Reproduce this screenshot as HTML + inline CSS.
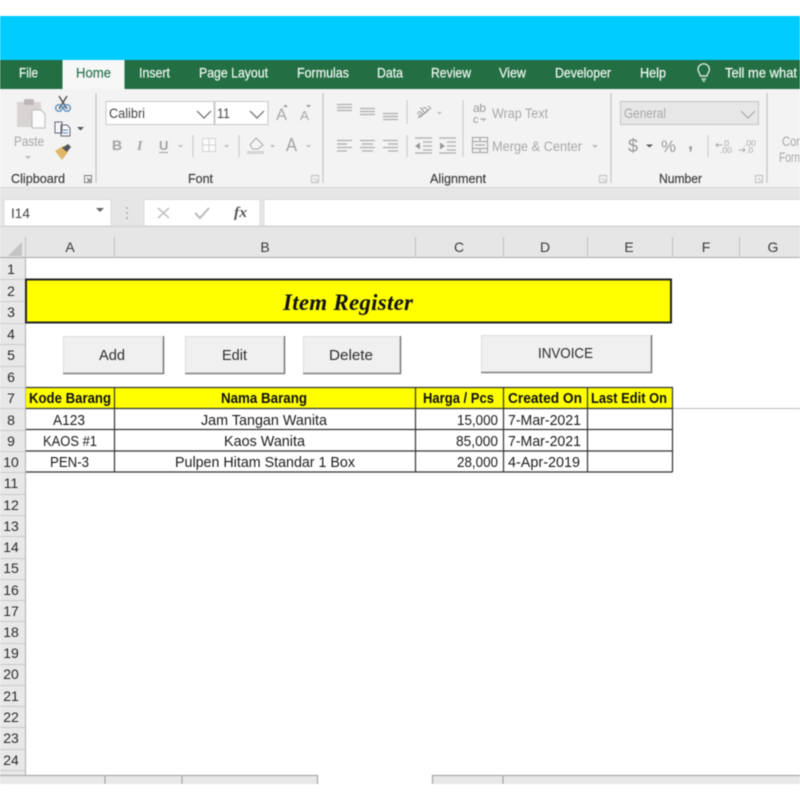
<!DOCTYPE html>
<html><head><meta charset="utf-8"><title>Item Register</title>
<style>
html,body{margin:0;padding:0;background:#fff;width:800px;height:800px;overflow:hidden}
svg{display:block;filter:blur(.45px)}
text{font-family:"Liberation Sans",sans-serif;}
.tab{font-size:14px;fill:#f2f8f4;stroke:#f2f8f4;stroke-width:.2}
.lbl{font-size:13px;fill:#3a3a3a;stroke:#3a3a3a;stroke-width:.15}
.dis{font-size:14px;fill:#a8a8a8}
.col{font-size:14px;fill:#3a3a3a;text-anchor:middle}
.row{font-size:14px;fill:#2a2a2a;text-anchor:middle}
.cell{font-size:14.500px;fill:#1c1c1c}
.hd{font-size:14.500px;font-weight:bold;fill:#111}
.btn{font-size:15px;fill:#2c2c2c}
.ln{stroke:#adadad;stroke-width:1.200;fill:none}
.sep{stroke:#cdcdcd;stroke-width:1.200}
.gsep{stroke:#c6c6c6;stroke-width:1.300}
.chev{stroke:#666;stroke-width:1.200;fill:none}
</style></head><body>
<svg width="800" height="800" viewBox="0 0 800 800" xmlns="http://www.w3.org/2000/svg">
<rect width="800" height="800" fill="#fff"/>
<rect y="16" width="800" height="44" fill="#00ccff"/>
<rect y="60" width="800" height="29" fill="#236f43"/>
<rect x="62.500" y="60" width="62" height="30" fill="#f7f7f7"/>
<text class="tab" x="19" y="77.500" textLength="19" lengthAdjust="spacingAndGlyphs">File</text>
<text class="tab" style="fill:#2a7450;stroke:#2a7450" x="76" y="77.500" textLength="35" lengthAdjust="spacingAndGlyphs">Home</text>
<text class="tab" x="139" y="77.500" textLength="31" lengthAdjust="spacingAndGlyphs">Insert</text>
<text class="tab" x="199" y="77.500" textLength="69" lengthAdjust="spacingAndGlyphs">Page Layout</text>
<text class="tab" x="297" y="77.500" textLength="52" lengthAdjust="spacingAndGlyphs">Formulas</text>
<text class="tab" x="377" y="77.500" textLength="26" lengthAdjust="spacingAndGlyphs">Data</text>
<text class="tab" x="431" y="77.500" textLength="40" lengthAdjust="spacingAndGlyphs">Review</text>
<text class="tab" x="499" y="77.500" textLength="27" lengthAdjust="spacingAndGlyphs">View</text>
<text class="tab" x="555" y="77.500" textLength="56" lengthAdjust="spacingAndGlyphs">Developer</text>
<text class="tab" x="640" y="77.500" textLength="26" lengthAdjust="spacingAndGlyphs">Help</text>
<text class="tab" x="725" y="77.500" textLength="72" lengthAdjust="spacingAndGlyphs">Tell me what</text>
<path d="M700.500 76c0-2-2.500-3.500-2.500-6.500a5.700 5.700 0 0 1 11.400 0c0 3-2.500 4.500-2.500 6.500zM701.500 79h4.500M702.500 81h2.500" fill="none" stroke="#eef5f0" stroke-width="1.200"/>

<!-- ribbon -->
<rect y="89" width="800" height="98" fill="#f3f3f3"/>
<g class="gsep"><path d="M96 93V183M323 93V183M611 93V183M767 93V183"/></g>

<!-- clipboard -->
<path d="M17 102h24v25H17z" fill="#d8d4d4"/><rect x="24" y="99" width="10" height="6" rx="2" fill="#bcb8b8"/>
<path d="M32 110h9l4 4v14H32z" fill="#fbfbfb" stroke="#bbb" stroke-width="1"/>
<text class="dis" x="14" y="146" textLength="30" lengthAdjust="spacingAndGlyphs">Paste</text>
<path d="M25 156h6l-3 3z" fill="#bbb"/>
<path d="M59 96l8 13M67 96l-8 13" stroke="#555" stroke-width="1.500" fill="none"/>
<circle cx="59" cy="108" r="3.300" fill="none" stroke="#5a8fc0" stroke-width="1.400"/><circle cx="67" cy="108" r="3.300" fill="none" stroke="#5a8fc0" stroke-width="1.400"/>
<path d="M55 122h7v11h-7zM61 125h6l3 3v8h-9z" fill="#f7f7f7" stroke="#667" stroke-width="1"/><path d="M63 130h5M63 133h5" stroke="#5a8fc0"/>
<path d="M77 127h7l-3.500 3.500z" fill="#555"/>
<path d="M55 151l8-5 5 6-6 8z" fill="#e2b668"/><path d="M62 148l6-4 3 3-4 5z" fill="#555"/>
<text class="lbl" x="11" y="183" textLength="54" lengthAdjust="spacingAndGlyphs">Clipboard</text>
<path d="M84.500 175.500h7v7h-7zM87 178l3 3M90 178.500V181H87.500" fill="none" stroke="#777" stroke-width=".9"/>

<!-- font -->
<rect x="106" y="101.500" width="108" height="23" fill="#fff" stroke="#c9c9c9"/>
<rect x="215" y="101.500" width="53" height="23" fill="#fff" stroke="#c9c9c9"/>
<text x="109" y="118" font-size="14" fill="#444" textLength="36" lengthAdjust="spacingAndGlyphs">Calibri</text>
<text x="217" y="118" font-size="14" fill="#444" textLength="13" lengthAdjust="spacingAndGlyphs">11</text>
<path class="chev" d="M197 111l7 7 7-7M250 111l7 7 7-7"/>
<text x="276" y="120" font-size="17" fill="#aaa" textLength="11" lengthAdjust="spacingAndGlyphs">A</text>
<text x="300" y="120" font-size="13" fill="#aaa" textLength="9" lengthAdjust="spacingAndGlyphs">A</text>
<path d="M283 107h5l-2.500-2.500zM306 105h5l-2.500 2.500z" fill="#999"/>
<text x="112" y="150" font-size="14" font-weight="bold" fill="#a3a3a3">B</text>
<text x="137" y="150" font-size="14" font-weight="bold" font-style="italic" fill="#a3a3a3" style="font-family:'Liberation Serif',serif">I</text>
<text x="159" y="150" font-size="13" font-weight="bold" fill="#a3a3a3">U</text>
<path d="M159 152.500h9" stroke="#a3a3a3"/>
<path d="M178 145h5l-2.500 2.500zM224 145h5l-2.500 2.500zM270 145h5l-2.500 2.500zM306 145h5l-2.500 2.500z" fill="#bbb"/>
<path class="sep" d="M193 135V157M239 135V157"/>
<path d="M202.500 138.500h13v13h-13zM209 138.500v13M202.500 145h13" fill="#fbfbfb" stroke="#d2d2d2"/>
<path d="M250 145l6-7 7 7-5 4h-5z" fill="#f4f4f4" stroke="#aaa"/><rect x="247" y="151" width="17" height="3" fill="#d5d5d5"/>
<text x="286" y="151" font-size="18" fill="#a3a3a3" textLength="11" lengthAdjust="spacingAndGlyphs">A</text>
<text class="lbl" x="188" y="183" textLength="25" lengthAdjust="spacingAndGlyphs">Font</text>
<path d="M311.500 175.500h7v7h-7zM314 178l3 3" fill="none" stroke="#bbb" stroke-width=".9"/>

<!-- alignment -->
<path class="ln" d="M337 104.500h15M337 107.500h15M337 110.500h15M360 108.500h15M360 111.500h15M360 114.500h15M383 113.500h15M383 116.500h15M383 119.500h15"/>
<path class="ln" d="M337 140.500h15M337 144h10M337 147.500h15M337 151h10M360 140.500h15M362 144h11M360 147.500h15M362 151h11M383 140.500h15M388 144h10M383 147.500h15M388 151h10"/>
<path class="sep" d="M407 100V124M407 135V157M463 100V157"/>
<path class="ln" d="M418 118l13-10M428 106l3 2"/><text x="416" y="116" font-size="11" fill="#999" transform="rotate(-40 421 112)">ab</text>
<path d="M437 112h5l-2.500 2.500z" fill="#bbb"/>
<path class="ln" d="M415 138h17M423 142h9M423 146h9M423 150h9M415 153h17M456 138h-17M447 142h9M447 146h9M447 150h9M439 153h17"/>
<path d="M415 146l5-3.500v7zM445 146l-5-3.500v7z" fill="#999"/>
<text x="473" y="112" font-size="12" fill="#999" textLength="13">ab</text>
<text x="473" y="123" font-size="11" fill="#999">c</text>
<path class="ln" d="M480 119h5l-2 2"/>
<text class="dis" x="492" y="118" textLength="56" lengthAdjust="spacingAndGlyphs">Wrap Text</text>
<path class="ln" d="M472.500 137.500h15v15h-15zM472.500 141.500h15M472.500 148.500h15M480 137.500v4M480 148.500v4M475 145h10"/>
<text class="dis" x="492" y="151" textLength="90" lengthAdjust="spacingAndGlyphs">Merge &amp; Center</text>
<path d="M592 145h6l-3 3z" fill="#bbb"/>
<text class="lbl" x="430" y="183" textLength="56" lengthAdjust="spacingAndGlyphs">Alignment</text>
<path d="M599.500 175.500h7v7h-7zM602 178l3 3" fill="none" stroke="#bbb" stroke-width=".9"/>

<!-- number -->
<rect x="620.500" y="101.500" width="138" height="23" fill="#e7e7e7" stroke="#c4c4c4"/>
<text class="dis" x="624" y="118" textLength="42" lengthAdjust="spacingAndGlyphs">General</text>
<path d="M741 111l7 7 7-7" fill="none" stroke="#aaa" stroke-width="1.200"/>
<text x="628" y="152" font-size="18" fill="#999" textLength="10" lengthAdjust="spacingAndGlyphs">$</text>
<path d="M646 144.500h7l-3.500 3z" fill="#555"/>
<text x="661" y="152" font-size="17" fill="#999" textLength="15" lengthAdjust="spacingAndGlyphs">%</text>
<text x="688" y="149" font-size="18" font-weight="bold" fill="#999">,</text>
<path class="sep" d="M708 135V157"/>
<text x="722" y="146" font-size="8.500" fill="#aaa">.0</text><text x="720" y="153" font-size="8.500" fill="#aaa">.00</text>
<text x="744" y="146" font-size="8.500" fill="#aaa">.00</text><text x="746" y="153" font-size="8.500" fill="#aaa">.0</text>
<path d="M716 145h6M718 143l-2 2 2 2M739 150h6M743 148l2 2-2 2" stroke="#aaa" fill="none" stroke-width=".9"/>
<text class="lbl" x="659" y="183" textLength="43" lengthAdjust="spacingAndGlyphs">Number</text>
<path d="M755.500 175.500h7v7h-7zM758 178l3 3" fill="none" stroke="#bbb" stroke-width=".9"/>
<text class="dis" x="782" y="146" textLength="18" lengthAdjust="spacingAndGlyphs">Cor</text>
<text class="dis" x="779" y="162" textLength="21" lengthAdjust="spacingAndGlyphs">Forn</text>

<!-- formula bar -->
<rect y="187" width="800" height="39" fill="#e6e6e6"/>
<path d="M0 187.500H800" stroke="#d6d6d6"/>
<rect x="4" y="199.500" width="107" height="26.500" fill="#fff" stroke="#dadada"/>
<rect x="144" y="199.500" width="116" height="26.500" fill="#fff" stroke="#dadada"/>
<rect x="264" y="199.500" width="537" height="26.500" fill="#fff" stroke="#dadada"/>
<text x="11" y="218" font-size="14" fill="#444" textLength="19" lengthAdjust="spacingAndGlyphs">I14</text>
<path d="M96 208h8l-4 4z" fill="#666"/>
<path d="M127 207v2M127 212v2M127 217v2" stroke="#aaa" stroke-width="1.500"/>
<path d="M158 208l11 10M169 208l-11 10" stroke="#bbb" stroke-width="1.500"/>
<path d="M195 213l5 5 9-10" stroke="#bbb" stroke-width="2" fill="none"/>
<text x="234" y="217" font-size="15" font-style="italic" font-weight="bold" fill="#555" style="font-family:'Liberation Serif',serif" textLength="13" lengthAdjust="spacingAndGlyphs">fx</text>

<!-- col headers -->
<rect y="226" width="800" height="31" fill="#e6e6e6"/>
<path d="M0 226.500H800" stroke="#cfcfcf"/>
<rect y="257" width="800" height="1" fill="#a8a8a8"/>
<path d="M22 242v14H8z" fill="#c4c4c4"/>
<path d="M25.500 237V258M114.500 237V258M415.500 237V258M503.500 237V258M587.500 237V258M672.500 237V258M739.500 237V258" stroke="#c0c0c0"/>
<text class="col" x="70" y="252">A</text><text class="col" x="265" y="252">B</text><text class="col" x="459" y="252">C</text><text class="col" x="545" y="252">D</text><text class="col" x="629" y="252">E</text><text class="col" x="706" y="252">F</text><text class="col" x="773" y="252">G</text>

<!-- row headers -->
<rect y="258" width="25" height="517" fill="#e8e8e8"/>
<rect x="25" y="258" width="1" height="517" fill="#b0b0b0"/>
<path stroke="#cacaca" d="M0 279.500h25M0 301.500h25M0 323.500h25M0 344.500h25M0 366.500h25M0 387.500h25M0 408.500h25M0 430.500h25M0 451.500h25M0 472.500h25M0 494.500h25M0 515.500h25M0 536.500h25M0 558.500h25M0 579.500h25M0 600.500h25M0 621.500h25M0 643.500h25M0 664.500h25M0 685.500h25M0 706.500h25M0 727.500h25M0 749.500h25M0 770.500h25"/>
<text class="row" x="11" y="274">1</text><text class="row" x="11" y="296">2</text><text class="row" x="11" y="317">3</text><text class="row" x="11" y="339">4</text><text class="row" x="11" y="360">5</text><text class="row" x="11" y="382">6</text><text class="row" x="11" y="403">7</text><text class="row" x="11" y="425">8</text><text class="row" x="11" y="446">9</text><text class="row" x="11" y="467">10</text><text class="row" x="11" y="488">11</text><text class="row" x="11" y="510">12</text><text class="row" x="11" y="531">13</text><text class="row" x="11" y="552">14</text><text class="row" x="11" y="573">15</text><text class="row" x="11" y="595">16</text><text class="row" x="11" y="616">17</text><text class="row" x="11" y="637">18</text><text class="row" x="11" y="658">19</text><text class="row" x="11" y="679">20</text><text class="row" x="11" y="701">21</text><text class="row" x="11" y="722">22</text><text class="row" x="11" y="743">23</text><text class="row" x="11" y="765">24</text>

<!-- title -->
<rect x="26" y="279.500" width="645" height="43" fill="#ffff00" stroke="#222" stroke-width="2"/>
<text x="283" y="310" font-size="23" font-weight="bold" font-style="italic" fill="#111" style="font-family:'Liberation Serif',serif" textLength="130" lengthAdjust="spacing">Item Register</text>

<!-- buttons -->
<g fill="#f0f0f0" stroke="none">
<rect x="63" y="336" width="101" height="38"/><rect x="185" y="336" width="100" height="38"/><rect x="303" y="336" width="98" height="38"/><rect x="481" y="335" width="171" height="38"/>
</g>
<g fill="none" stroke="#7d7d7d" stroke-width="1.600">
<path d="M63 373.500h100.500V336M185 373.500h99.500V336M303 373.500h97.500V336M481 372.500h170.500V335"/>
</g>
<g fill="none" stroke="#dcdcdc"><path d="M63.500 373V336.500H163M185.500 373V336.500H284M303.500 373V336.500H400M481.500 372V335.500H651"/></g>
<text class="btn" x="99" y="360" textLength="26" lengthAdjust="spacingAndGlyphs">Add</text>
<text class="btn" x="222" y="360" textLength="25" lengthAdjust="spacingAndGlyphs">Edit</text>
<text class="btn" x="329" y="360" textLength="44" lengthAdjust="spacingAndGlyphs">Delete</text>
<text class="btn" x="538" y="358" textLength="55" lengthAdjust="spacingAndGlyphs">INVOICE</text>

<!-- table -->
<path d="M672 408.500H800" stroke="#bdbdbd"/>
<rect x="26" y="387" width="646" height="21" fill="#ffff00"/>
<path d="M26 387.500H672.500V472M26 408.500H672.500M26 429.500H672.500M26 451H672.500M26 472H672.500M114.500 387V472M415.500 387V472M503.500 387V472M587.500 387V472" stroke="#333" stroke-width="1.200" fill="none"/>
<text class="hd" x="29" y="403" textLength="82" lengthAdjust="spacingAndGlyphs">Kode Barang</text>
<text class="hd" x="221" y="403" textLength="86" lengthAdjust="spacingAndGlyphs">Nama Barang</text>
<text class="hd" x="423" y="403" textLength="71" lengthAdjust="spacingAndGlyphs">Harga / Pcs</text>
<text class="hd" x="508" y="403" textLength="74" lengthAdjust="spacingAndGlyphs">Created On</text>
<text class="hd" x="591" y="403" textLength="76" lengthAdjust="spacingAndGlyphs">Last Edit On</text>
<text class="cell" x="53" y="425" textLength="32" lengthAdjust="spacingAndGlyphs">A123</text>
<text class="cell" x="201" y="425" textLength="126" lengthAdjust="spacingAndGlyphs">Jam Tangan Wanita</text>
<text class="cell" x="457" y="425" textLength="41" lengthAdjust="spacingAndGlyphs">15,000</text>
<text class="cell" x="508" y="425" textLength="73" lengthAdjust="spacingAndGlyphs">7-Mar-2021</text>
<text class="cell" x="43" y="446" textLength="54" lengthAdjust="spacingAndGlyphs">KAOS #1</text>
<text class="cell" x="224" y="446" textLength="81" lengthAdjust="spacingAndGlyphs">Kaos Wanita</text>
<text class="cell" x="456" y="446" textLength="42" lengthAdjust="spacingAndGlyphs">85,000</text>
<text class="cell" x="508" y="446" textLength="73" lengthAdjust="spacingAndGlyphs">7-Mar-2021</text>
<text class="cell" x="50" y="467" textLength="39" lengthAdjust="spacingAndGlyphs">PEN-3</text>
<text class="cell" x="175" y="467" textLength="180" lengthAdjust="spacingAndGlyphs">Pulpen Hitam Standar 1 Box</text>
<text class="cell" x="457" y="467" textLength="41" lengthAdjust="spacingAndGlyphs">28,000</text>
<text class="cell" x="508" y="467" textLength="72" lengthAdjust="spacingAndGlyphs">4-Apr-2019</text>

<!-- bottom bar -->
<rect y="775" width="317" height="9" fill="#e8e8e8"/>
<rect x="432" y="775" width="368" height="9" fill="#e8e8e8"/>
<path d="M0 775.500H317.500V784M432.500 784V775.500H800" stroke="#aaa" fill="none" stroke-width="1.300"/>
<path d="M105 776V784M182 776V784M503 776V784" stroke="#999"/>
</svg>
</body></html>
